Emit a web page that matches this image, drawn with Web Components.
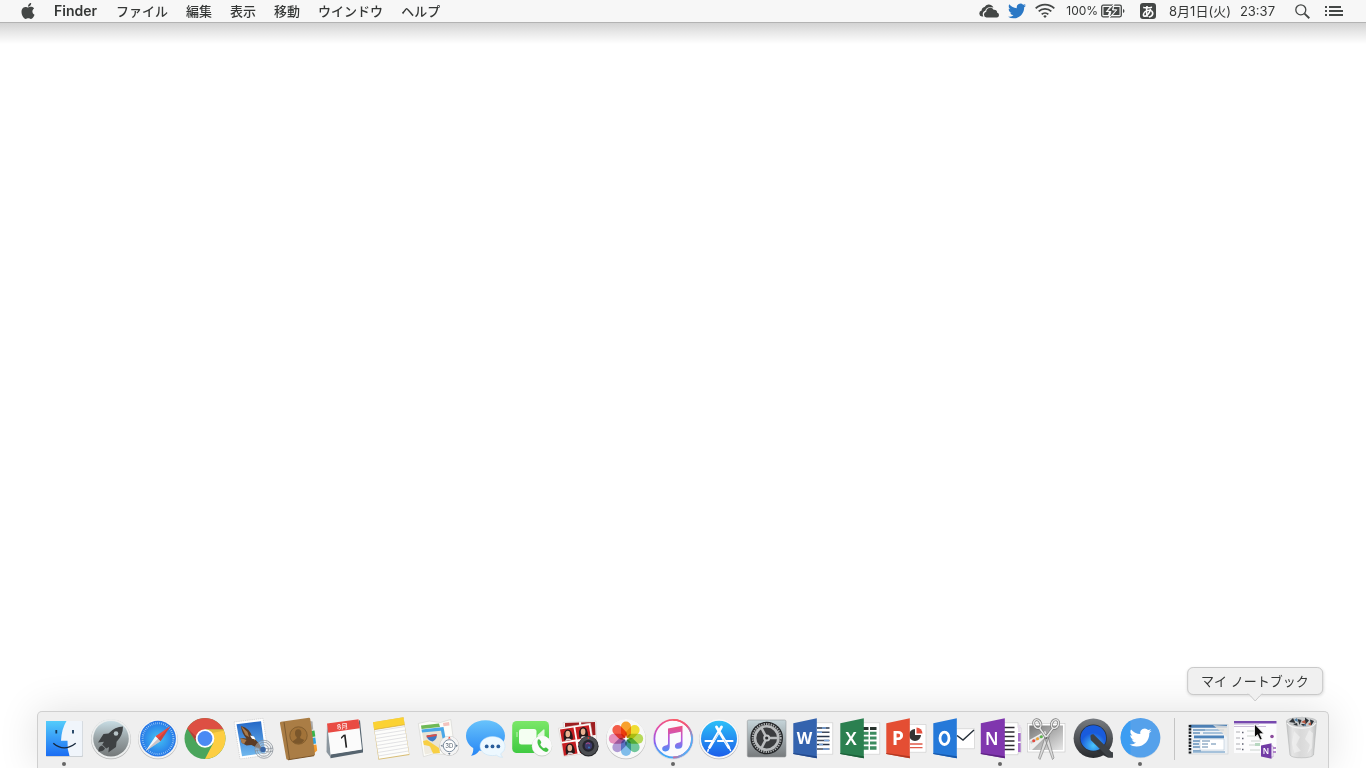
<!DOCTYPE html>
<html lang="ja">
<head>
<meta charset="utf-8">
<title>Finder</title>
<style>
  html, body { height: 100%; margin: 0; }
  body { background: #fff; color: #353736; font: 13px/22px Inter, "Noto Sans CJK JP", sans-serif; overflow: hidden; }
  .petals { isolation: isolate; }
  .petals rect { mix-blend-mode: multiply; }
</style>
</head>
<body>
<mac-desktop>
  <menu-bar slot="top">
    <menu-entry label="アップル"><svg width="16" height="16" viewBox="0 0 24 24" fill="#444746"><path d="M12.152 6.896c-.948 0-2.415-1.078-3.96-1.04-2.04.027-3.91 1.183-4.961 3.014-2.117 3.675-.546 9.103 1.519 12.09 1.013 1.454 2.208 3.09 3.792 3.039 1.52-.065 2.09-.987 3.935-.987 1.831 0 2.35.987 3.96.948 1.637-.026 2.676-1.48 3.676-2.948 1.156-1.688 1.636-3.325 1.662-3.415-.039-.013-3.182-1.221-3.22-4.857-.026-3.04 2.48-4.494 2.597-4.559-1.429-2.09-3.623-2.324-4.39-2.376-2-.156-3.675 1.09-4.61 1.09zM15.53 3.83c.843-1.012 1.4-2.427 1.245-3.83-1.207.052-2.662.805-3.532 1.818-.78.896-1.454 2.338-1.273 3.714 1.338.104 2.715-.871 3.56-1.702z"/></svg></menu-entry>
    <menu-entry strong>Finder</menu-entry>
    <menu-entry medium>ファイル</menu-entry>
    <menu-entry medium>編集</menu-entry>
    <menu-entry medium>表示</menu-entry>
    <menu-entry medium>移動</menu-entry>
    <menu-entry medium>ウインドウ</menu-entry>
    <menu-entry medium>ヘルプ</menu-entry>

    <menu-entry slot="status" label="OneDrive"><svg width="20" height="16" viewBox="0 0 20 16" fill="#444746"><path d="M4.300 13.500H3A3 3 0 0 1 2.600 7.600 3.800 3.800 0 0 1 5.600 4a5 5 0 0 1 8-.8q.6.7.8 1.300-1.400-.5-2.700-.2C9.200 3.700 6.700 5.200 6.200 7.800 4 8.200 3 11.300 4.300 13.500Z"/><path d="M7.500 14.500a2.900 2.900 0 0 1-.3-5.700C7.200 4.700 12.700 3.200 14.500 6.700c2.300-.3 3.700 1 3.700 3 2.500.4 2.300 4.800-.4 4.800Z"/></svg></menu-entry>
    <menu-entry slot="status" label="Twitter"><svg width="18" height="18" viewBox="0 0 24 24" fill="#2b78c5"><path d="M23.953 4.57a10 10 0 01-2.825.775 4.958 4.958 0 002.163-2.723c-.951.555-2.005.959-3.127 1.184a4.92 4.92 0 00-8.384 4.482C7.69 8.095 4.067 6.13 1.64 3.162a4.822 4.822 0 00-.666 2.475c0 1.71.87 3.213 2.188 4.096a4.904 4.904 0 01-2.228-.616v.06a4.923 4.923 0 003.946 4.827 4.996 4.996 0 01-2.212.085 4.936 4.936 0 004.604 3.417 9.867 9.867 0 01-6.102 2.105c-.39 0-.779-.023-1.17-.067a13.995 13.995 0 007.557 2.209c9.053 0 13.998-7.496 13.998-13.985 0-.21 0-.42-.015-.63A9.935 9.935 0 0024 4.59z"/></svg></menu-entry>
    <menu-entry slot="status" label="Wi-Fi"><svg width="20" height="16" viewBox="0 0 20 16" fill="none" stroke="#444746" stroke-width="1.800"><path d="M.7 5.400a13.200 13.200 0 0 1 18.600 0M3.700 8.400a9 9 0 0 1 12.600 0M6.700 11.400a4.700 4.700 0 0 1 6.600 0"/><path d="M8.300 13.200a2.400 2.400 0 0 1 3.400 0L10 15Z" fill="#444746" stroke="none"/></svg></menu-entry>
    <menu-entry slot="status" small>100%<svg width="24" height="14" viewBox="0 0 24 14"><rect x=".7" y="1.200" width="19.600" height="11.600" rx="1.500" fill="none" stroke="#444746" stroke-width="1.300"/><path d="M22 5v4q1.500-.5 1.500-2T22 5Z" fill="#444746"/><path d="M2.500 3h6L4.500 8H8L7 11H2.500ZM13 3h5.500v8h-6.500l4.500-5.500h-4Z" fill="#444746"/><path d="M13 0 6 7.500h4L8 14l7.500-8h-4Z" fill="#444746" stroke="#f7f7f7" stroke-width="1"/></svg></menu-entry>
    <menu-entry slot="status"><input-badge>あ</input-badge></menu-entry>
    <menu-entry slot="status">8月1日(火)</menu-entry>
    <menu-entry slot="status">23:37</menu-entry>
    <menu-entry slot="status" label="検索"><svg width="32" height="16" viewBox="-2 0 32 16" fill="none" stroke="#444746"><circle cx="14.800" cy="6.800" r="5" stroke-width="1.300"/><path d="m18.500 10.600 4.800 4.600" stroke-width="1.900"/></svg></menu-entry>
    <menu-entry slot="status" label="通知センター"><svg width="18" height="12" viewBox="0 0 18 12" fill="#444746"><path d="M0 1h2v2H0zM0 5h2v2H0zM0 9h2v2H0zM4 1h12v2H4zM4 5h14v2H4zM4 9h14v2H4z"/></svg></menu-entry>
  </menu-bar>

  <dock-bar slot="bottom">
    <dock-item label="Finder" running><svg viewBox="0 0 46 46"><defs><linearGradient id="fd" x2="0" y2="1"><stop stop-color="#54ccfb"/><stop offset="1" stop-color="#1b6df3"/></linearGradient></defs><rect x="5" y="5" width="37" height="36" rx="1" fill="#cbd0d4"/><rect x="5" y="5" width="36.300" height="35" rx="1" fill="#f0f5fb"/><path d="M5 5h20.500Q20.500 13 20 24.800h6.500Q26 33 28.500 40H5Z" fill="url(#fd)"/><path d="M15.300 14v3.600M32 14v3.600" stroke="#173a5c" stroke-width="1.800"/><path d="M12.300 27.300Q23 36.500 34.700 27.300" fill="none" stroke="#16283c" stroke-width="1.400"/></svg></dock-item>

    <dock-item label="Launchpad"><svg viewBox="0 0 46 46"><defs><linearGradient id="lp" x2="0" y2="1"><stop stop-color="#c8dde4"/><stop offset=".5" stop-color="#98a2a5"/><stop offset="1" stop-color="#75797a"/></linearGradient></defs><circle cx="23" cy="23.300" r="20" fill="#b4b4b4"/><circle cx="23" cy="22.700" r="19.700" fill="#eceeee"/><circle cx="23" cy="22.700" r="17.800" fill="url(#lp)"/><path d="M35 10.500Q27 10.500 20.500 17.500L15.500 18 10 26.500l6-.7-1.800 2.700 4 4 2.800-1.600-.7 5.600 7.700-5.500.6-5.200Q35 19.500 35 10.500Z" fill="#3e4143"/><path d="M14 29.500q-4 1-3.500 6 5 .3 6.500-3.300Z" fill="#3e4143"/><circle cx="28" cy="17.500" r="2.300" fill="#b7c3c7"/></svg></dock-item>

    <dock-item label="Safari"><svg viewBox="0 0 46 46"><defs><radialGradient id="sf"><stop stop-color="#45c4f4"/><stop offset="1" stop-color="#2474e6"/></radialGradient></defs><circle cx="23" cy="23.300" r="20" fill="#bcbcbc"/><circle cx="23" cy="22.700" r="19.700" fill="#f3f3f3"/><circle cx="23" cy="22.700" r="17.900" fill="url(#sf)"/><circle cx="23" cy="22.700" r="15.500" fill="none" stroke="#b4dcfa" stroke-width="2" stroke-dasharray=".6 1.400"/><path d="M35.500 10 20.500 20.200 25.500 25.200Z" fill="#f04a3e"/><path d="M10.500 35.300 20.500 20.200 25.500 25.200Z" fill="#f3f6f8"/><path d="m10.500 35.300 15-10.100L35.500 10 23 22.700Z" fill="#4e2f3a" opacity=".25"/></svg></dock-item>

    <dock-item label="Chrome"><svg viewBox="0 0 46 46"><circle cx="23" cy="22.500" r="20.500" fill="#4aa55c"/><path d="M5.250 12.250A20.500 20.500 0 0 1 40.750 12.250L42 13.500H23L15.200 27Z" fill="#dd4f43"/><path d="M41.400 13.500A20.500 20.500 0 0 1 23 43l8.300-16L23 13.500Z" fill="#fdce42"/><path d="M5.250 12.250 15.200 27 23 13.500 14 9Z" fill="#dd4f43"/><path d="M23 13.500h18.400l.5 1.200L30 17Z" fill="#c9a52f" opacity=".5"/><path d="m6 13 9 14 .5-5Z" fill="#8b3a32" opacity=".6"/><circle cx="23" cy="22.500" r="9.300" fill="#fff"/><circle cx="23" cy="22.500" r="7.400" fill="#4a8af4"/></svg></dock-item>

    <dock-item label="メール"><svg viewBox="1 0 46 46"><defs><linearGradient id="ml" x2="0" y2="1"><stop stop-color="#2468c7"/><stop offset="1" stop-color="#70b8ee"/></linearGradient></defs><path d="m6 6 29-3.700L40.500 39 12 43Z" fill="#fff" stroke="#cfcfcf" stroke-width=".8" stroke-dasharray="1.400 .8"/><path d="M8.500 8.300 33 5.200 37.300 37 14 40.300Z" fill="url(#ml)"/><path d="M13 10q9 2.500 11 10.500l1.500 2q5 3 8 10-2 .8-4-.5l-6-3-5 .5-4.500-2.500q-1-2-1.500-5l6 .5Q13.500 17 13 10Z" fill="#5b3b25"/><path d="m13 10 6.500 6 1.500 5-3.500-2ZM12.500 22l6 2-2.500 4-2.500-1.500Z" fill="#a97a4b"/><path d="m22 19.500 4 1 1.500 3-3.500-.7Z" fill="#fff"/><path d="m26 23 1.500.5-1 1Z" fill="#e9b23a"/><g fill="none" stroke="#858d95" stroke-width=".7"><circle cx="36" cy="33.300" r="9" fill="#e8edf1" fill-opacity=".35"/><circle cx="36" cy="33.300" r="7"/><circle cx="36" cy="33.300" r="4.500"/><path d="M27 32q4-2 9 0t9 0M27 35q4-2 9 0t9 0"/></g><circle cx="35" cy="33.500" r="2.800" fill="#3865a5"/></svg></dock-item>

    <dock-item label="連絡先"><svg viewBox="0 0 46 46"><path d="m35 4 3 1 3 31-2 2Z" fill="#ececec"/><path d="m35 5 2.500.5.7 8-2 .3Z" fill="#aaa"/><path d="m36 15 3.500-.5.8 6-3.300.5Z" fill="#37b44a"/><path d="m37 22 3.300-.5.8 6-3.300.5Z" fill="#31a3df"/><path d="m38 29 3.400-.5.8 6-3.400 3Z" fill="#f59c2d"/><path d="M6 5.800 34 1.700q1 0 1.200 1L40 38.500q0 1-1 1.200l-26 4.100q-1.400.2-1.700-1L5 7.500q-.3-1.400 1-1.700Z" fill="#aa7d45"/><path d="m9 6 5.500 37.200" stroke="#7e5b30" stroke-width="1"/><path d="m13 43.800 26-4.100" stroke="#795327"/><circle cx="23.500" cy="19.500" r="8.700" fill="#a27339" stroke="#7e5a2d" stroke-width=".9"/><ellipse cx="23.200" cy="17.300" rx="3.200" ry="4" fill="#7b572b"/><path d="M22 20h3l.3 2.300 4 1.700q-2 3.500-5.500 3.800t-6.300-2.300l4-3Z" fill="#7b572b"/></svg></dock-item>

    <dock-item label="カレンダー"><svg viewBox="1 0 46 46"><path d="m6 8 1.500 0L10 42l-4.500-6Z" fill="#8b969e"/><path d="m10 38 32-5v3.500L9.500 42.300Z" fill="#56646f"/><path d="m37.500 4 1.500.5L42 34.500l-2-.5Z" fill="#596873"/><path d="m6 7.500 31.500-4.300L41 33.500 9.700 38.500Z" fill="#fbfbfb"/><path d="m6 7.500 31.500-4.300 1.300 9L7.200 16.700Z" fill="#e94b43"/><g transform="rotate(-7 23 22)" text-anchor="middle" font-family="Inter, 'Noto Sans CJK JP', sans-serif"><text x="23" y="13" font-size="7" fill="#fff">8月</text><text x="23" y="32" font-size="18" fill="#222">1</text></g></svg></dock-item>

    <dock-item label="メモ"><svg viewBox="1 0 46 46"><path d="m5 6.300 30.500-5L41.500 39 10.500 43.800Z" fill="#d8bd75"/><path d="m5.500 8 30-5L41 38 11 42.700Z" fill="#fdfdfb"/><path d="m5 6.300 30.500-5 1.200 7.500L6.200 13.700Z" fill="#fbd233"/><path d="m6 15.500 31-5M7 19l31-5M7.500 22.500l31-5M8 26l31-5M8.500 29.500l31-5M9 33l30.500-5M9.700 36.500l30.500-5M10 40l30.500-5" stroke="#d5d6da" stroke-width=".7"/><path d="m6.200 13.700 30.500-4.900" stroke="#c99e33" stroke-width=".6"/></svg></dock-item>

    <dock-item label="マップ"><svg viewBox="1 0 46 46"><path d="m3.300 7.500 11-2.500 11 1.500 10.500-3L40 36.500l-11 2-10-1-10.500 3.200Z" fill="#fcfcf8" stroke="#d2d2ce" stroke-width=".6"/><path d="m6 9.500 18-2 1 3.500-18.500 2Z" fill="#6fb956"/><path d="m28 7 6-1 .5 3.500-6 .8Z" fill="#f3c4be"/><path d="m7 15.500 20-2.500 3 21-12 2-8 2Z" fill="#e9e4d5"/><path d="m6.500 13.500 22-2.500 2 11-3 .5-1.500-7.800L7 16.500Z" fill="#4aa8e8"/><path d="m8 25 4-1 12 8 1 5-7 .5-3-7-6-1Z" fill="#f8cf43"/><path d="m9 29 5 1 3 7-7 1.500Z" fill="#efebe0"/><path d="m11.500 19.500 10-1.500q1.500 5-3.800 7.500-5.400-.8-6.200-6Z" fill="#3d79c3"/><path d="m11.500 19.500 10-1.500.2 2-10 1.500Z" fill="#d94f48"/><circle cx="34.300" cy="30" r="9.900" fill="#bdbdbd"/><circle cx="34.300" cy="29.700" r="9.500" fill="#f4f4f4"/><circle cx="34.300" cy="29.700" r="6" fill="#fff" stroke="#5d7187" stroke-width=".8"/><path d="m34.300 20.500 1.300 2H33Z" fill="#e34835"/><path d="m34.300 39-1.300-2h2.600ZM25.500 29.700l2-1.300V31ZM43 29.700l-2-1.300V31Z" fill="#6b7a89"/><text x="34.300" y="32" font-size="6" text-anchor="middle" fill="#4c5a68" font-family="Inter, sans-serif">3D</text></svg></dock-item>

    <dock-item label="メッセージ"><svg viewBox="0 0 46 46"><defs><linearGradient id="ms" x2="0" y2="1"><stop stop-color="#68c3fb"/><stop offset="1" stop-color="#2786f5"/></linearGradient></defs><path d="M23.500 4.300C12.500 4.300 4 11 4 19.800c0 5 2.700 9.500 7.200 12.300q.5 4.800-2.200 7.700 5-.5 8.500-5.200 3 .8 6 .8C34.500 35.400 43 28.500 43 19.800S34.500 4.300 23.500 4.300Z" fill="url(#ms)"/><path d="M30.500 20.500c7 0 12.500 4.200 12.500 9.700 0 3.200-1.500 5.800-4.300 7.500q.2 2.200 2 3.600-4 0-6.300-2.200-2 .500-3.900.5C23.500 39.600 18 35.600 18 30.200s5.500-9.700 12.500-9.700Z" fill="#edf8ff" stroke="#bcdff6" stroke-width=".5"/><g fill="#295d9b"><circle cx="24.700" cy="30.400" r="1.900"/><circle cx="30.500" cy="30.400" r="1.900"/><circle cx="36.300" cy="30.400" r="1.900"/></g></svg></dock-item>

    <dock-item label="FaceTime"><svg viewBox="0 0 46 46"><defs><linearGradient id="ft" x2="0" y2="1"><stop stop-color="#7be768"/><stop offset="1" stop-color="#40ca42"/></linearGradient></defs><rect x="3.200" y="5" width="36.800" height="32" rx="4.500" fill="url(#ft)"/><rect x="10" y="13" width="17.500" height="15.500" rx="2.500" fill="#f4fff2"/><path d="m28.500 19 6-5.500q1-.5 1 .8v12.500q0 1-1 .5l-6-5Z" fill="#e4f8e0"/><path d="M8 16v5" stroke="#c5f2bc"/><circle cx="33" cy="30.200" r="10.200" fill="#c9d1c8"/><circle cx="33" cy="29.700" r="9.900" fill="#fbfbfb"/><path d="M28.800 23.700q1.300-1.200 2.400.5l1 1.900q.4 1-.8 1.800-.5.500 1.200 2.600t2.600 1.700q1.100-1.200 2-.6l1.900 1.400q1.200 1-.3 2.300-2.500 2.100-7-2.500t-3-9.100Z" fill="#45c246"/></svg></dock-item>

    <dock-item label="Photo Booth"><svg viewBox="1 0 46 46"><path d="m8 6.500 33-1.500.8 30-30 2Z" fill="#f8f4f2" stroke="#cbc6c4" stroke-width=".5"/><path d="m10 7 14-.5v6l-14 1Zm16-.5L40 6l.5 13-12 1Z" fill="#9e1d1f"/><path d="m3.400 12.300 32-5.200L40 36 9 40.500Z" fill="#fffaf8" stroke="#cbc6c4" stroke-width=".5"/><g id="pb"><path d="m5 13.500 13.500-2 2 12-13.500 2.300Z" fill="#c71f22"/><path d="M9 23.500q-1.500-8.500 3-10 5-1 6 9l-2 1.200q-3 1-6 1Z" fill="#26191a"/><ellipse cx="12.800" cy="18" rx="2.300" ry="3.200" fill="#e9b292"/><path d="m10 25 1.500-2.500h3l2.200 1.500Z" fill="#ded6d6"/></g><use href="#pb" x="15.300" y="-2.300"/><use href="#pb" x="2" y="14"/><path d="m23 26 10-1.500 2 11-10 1.500Z" fill="#9f191c"/><circle cx="33.400" cy="30.300" r="10.200" fill="#252629"/><circle cx="33.400" cy="29.700" r="9.500" fill="#4c4e52"/><circle cx="33.400" cy="29.700" r="6" fill="#25262d"/><circle cx="33.400" cy="29.700" r="3.700" fill="#3d3b6d"/><path d="M31 28q2-2.500 4 0" fill="none" stroke="#b64b82"/><circle cx="34" cy="31.500" r="1" fill="#3579bd"/><circle cx="33.400" cy="22" r=".9" fill="#d83d35"/></svg></dock-item>

    <dock-item label="写真"><svg viewBox="0 0 46 46"><circle cx="23" cy="23.300" r="20" fill="#bdbdbd"/><circle cx="23" cy="22.700" r="19.700" fill="#f8f8f8"/><g class="petals"><rect x="18" y="5.500" width="10" height="16.500" rx="5" fill="#f8a12e"/><rect x="18" y="5.500" width="10" height="16.500" rx="5" fill="#efdc32" transform="rotate(45 23 22.700)"/><rect x="18" y="5.500" width="10" height="16.500" rx="5" fill="#b7da58" transform="rotate(90 23 22.700)"/><rect x="18" y="5.500" width="10" height="16.500" rx="5" fill="#70c79b" transform="rotate(135 23 22.700)"/><rect x="18" y="5.500" width="10" height="16.500" rx="5" fill="#80bdea" transform="rotate(180 23 22.700)"/><rect x="18" y="5.500" width="10" height="16.500" rx="5" fill="#b09ad4" transform="rotate(225 23 22.700)"/><rect x="18" y="5.500" width="10" height="16.500" rx="5" fill="#e690bc" transform="rotate(270 23 22.700)"/><rect x="18" y="5.500" width="10" height="16.500" rx="5" fill="#f35d49" transform="rotate(315 23 22.700)"/></g><path d="m23 19 .8 2.900 2.900.8-2.900.8-.8 2.900-.8-2.900-2.900-.8 2.900-.8Z" fill="#fff"/></svg></dock-item>

    <dock-item label="iTunes" running><svg viewBox="0 0 46 46"><defs><linearGradient id="it" x1=".7" x2=".3" y2="1"><stop stop-color="#fa5c66"/><stop offset=".4" stop-color="#e04fac"/><stop offset=".75" stop-color="#8c5bef"/><stop offset="1" stop-color="#37b6f4"/></linearGradient><linearGradient id="ir" x2="1" y2="1"><stop stop-color="#fa5c66"/><stop offset=".45" stop-color="#ef5680"/><stop offset=".75" stop-color="#58b0f2"/><stop offset="1" stop-color="#37b6f4"/></linearGradient><linearGradient id="in" x2="0" y2="1"><stop stop-color="#f15078"/><stop offset=".5" stop-color="#b957de"/><stop offset="1" stop-color="#4b8ff7"/></linearGradient></defs><circle cx="23.200" cy="23" r="20.300" fill="#d0d0d4"/><circle cx="23.200" cy="22.700" r="20" fill="#fff"/><circle cx="23.200" cy="22.700" r="18.800" fill="#fafafd" stroke="url(#it)" stroke-width="1.800"/><path d="M23.200 3.900a18.800 18.800 0 0 1 0 37.600" fill="none" stroke="url(#ir)" stroke-width="1.800"/><path d="M18 12.500 32.500 9.700v18.500q0 4.500-4.300 4.600-3.200 0-3.300-2.600 0-2.600 3.300-3.400 2.700-.4 2.700-1.600v-9.400l-11.200 2.200v13q-.1 4.200-4.200 4.400-3.200-.1-3.300-2.700 0-2.500 3.300-3.200 2.500-.4 2.500-1.800Z" fill="url(#in)"/></svg></dock-item>

    <dock-item label="App Store"><svg viewBox="0 0 46 46"><defs><linearGradient id="as" x2="0" y2="1"><stop stop-color="#2cc0f8"/><stop offset="1" stop-color="#1c5eea"/></linearGradient></defs><circle cx="23" cy="23.300" r="20" fill="#b8b8bc"/><circle cx="23" cy="22.700" r="19.700" fill="#f8f8f8"/><circle cx="23" cy="22.700" r="18" fill="url(#as)"/><g stroke="#fff" fill="none" stroke-linecap="round"><path d="M9.500 25h8M22 25h14.500" stroke-width="2.200"/><path d="M13.500 31.500 25.500 11M20.500 11l12.300 20.500" stroke-width="2.800"/><path d="m12.300 33.500-.5 1.700M33.500 32.500l1 2" stroke-width="1.500"/></g><path d="m18 25 4.500-8" stroke="#9cc9f6" stroke-width=".7"/><path d="m27.500 22.800 3.500 6" stroke="#9cc9f6" stroke-width=".7"/></svg></dock-item>

    <dock-item label="システム環境設定"><svg viewBox="0 0 46 46"><defs><linearGradient id="sp" x2="0" y2="1"><stop stop-color="#c6d5da"/><stop offset="1" stop-color="#777a7c"/></linearGradient></defs><rect x="4.300" y="4" width="38.700" height="37" rx="1.500" fill="url(#sp)" stroke="#96999b" stroke-width=".6"/><circle cx="23.700" cy="22" r="16.300" fill="#232527"/><circle cx="23.700" cy="22" r="14" fill="none" stroke="#a9acad" stroke-width="2" stroke-dasharray="1.400 1"/><circle cx="23.700" cy="22" r="11.700" fill="#3a3c3e" stroke="#b9bcbd" stroke-width="2.600"/><path d="M23.700 22 18.500 12M23.700 22 18.500 32M23.700 22h11.500" stroke="#b9bcbd" stroke-width="2.600"/><circle cx="23.700" cy="22" r="3.500" fill="#c2c5c6"/><circle cx="23.700" cy="22" r="1.600" fill="#303234"/></svg></dock-item>

    <dock-item label="Word"><svg viewBox="0 0 46 46"><path d="M26 6.700h16.700v31.600H26Z" fill="#fff" stroke="#d0d0d0" stroke-width=".7"/><path d="M27 12h12.500M27 20.500h12.500M27 28.500h12.500" stroke="#27344a" stroke-width="1.600"/><path d="M27 16.200h12.500M27 24.500h12.500M27 33h12.500" stroke="#414b5c" stroke-width="1.600"/><path d="M32 12h4M27 16.200h5M34 24.500h5M29 28.500h4M33 33h6" stroke="#7aa5dd" stroke-width="1.600"/><path d="m3.300 7.300 23.500-5v40l-23.500-4.300Z" fill="#3463ae"/><path d="m3.300 38 23.500 4.300v-2L3.300 37Z" fill="#24498a"/><text x="14.500" y="28" font-size="16" font-weight="700" text-anchor="middle" fill="#fff" font-family="'Noto Sans', sans-serif">W</text></svg></dock-item>

    <dock-item label="Excel"><svg viewBox="0 0 46 46"><path d="M26 6.700h16.700v31.600H26Z" fill="#fff" stroke="#d0d0d0" stroke-width=".7"/><path d="M26 11h5.500v3H26zM33 11h6.500v3H33z" fill="#27332d"/><path d="M26 15.800h5.500v3H26zM33 15.800h6.500v3H33zM26 20.600h5.500v3H26zM33 20.600h6.500v3H33zM26 25.400h5.500v3H26zM33 25.400h6.500v3H33zM26 30.200h5.500v3.600H26zM33 30.200h6.500v3.600H33z" fill="#3c8c60"/><path d="m3.300 7.300 23.500-5v40l-23.500-4.300Z" fill="#2b8050"/><path d="m3.300 38 23.500 4.300v-2L3.300 37Z" fill="#1d6039"/><text x="14" y="29" font-size="18" font-weight="600" text-anchor="middle" fill="#fff" font-family="'Noto Sans', sans-serif">X</text></svg></dock-item>

    <dock-item label="PowerPoint"><svg viewBox="0 0 46 46"><path d="M26 8.500h17v27.800H26Z" fill="#fff" stroke="#d0d0d0" stroke-width=".7"/><path d="M32 13a6 6 0 1 0 6 6h-6Z" fill="#333"/><path d="M33.500 11.500a6 6 0 0 1 6 6h-6Z" fill="#e5503e"/><path d="M27 28h12.500M27 31.700h12.500" stroke="#e05a48" stroke-width="1.300"/><path d="m3.300 7.300 23.500-5v40l-23.500-4.300Z" fill="#e44e33"/><path d="m3.300 38 23.500 4.300v-2L3.300 37Z" fill="#b23922"/><text x="15" y="29" font-size="19" font-weight="700" text-anchor="middle" fill="#fff" font-family="'Noto Sans', sans-serif">P</text></svg></dock-item>

    <dock-item label="Outlook"><svg viewBox="0 0 46 46"><path d="M26 12.700h18.500v20H26Z" fill="#fff" stroke="#d0d0d0" stroke-width=".7"/><path d="m27 19.500 6 4.500 11-10" fill="none" stroke="#27313b" stroke-width="1.400"/><path d="m3.300 7.300 23.500-5v40l-23.500-4.300Z" fill="#2579d9"/><path d="m3.300 38 23.500 4.300v-2L3.300 37Z" fill="#1858a9"/><ellipse cx="14.500" cy="22.300" rx="4.500" ry="6.200" fill="none" stroke="#fff" stroke-width="2.800"/></svg></dock-item>

    <dock-item label="OneNote" running><svg viewBox="0 0 46 46"><path d="M27 6.700h14v5h3v25h-3v2H27Z" fill="#fff" stroke="#ccc" stroke-width=".7"/><path d="M41 17h2.700v8.500H41zM41 27h2.700v9H41z" fill="#a76fca"/><path d="M41 9h2.500v7H41z" fill="#e6dbec"/><path d="M27 11.500h10.500M27 16h10.500M27 20.500h10.500M27 25h10.500M27 29.500h10.500M27 33.500h10.500" stroke="#2d2931" stroke-width="1.500"/><path d="m3.800 7.300 24-5v40l-24-4.300Z" fill="#8036ae"/><path d="m3.800 38 24 4.300v-2L3.800 37Z" fill="#5d2482"/><text x="14.800" y="29" font-size="17" font-weight="600" text-anchor="middle" fill="#fff" font-family="'Noto Sans', sans-serif">N</text></svg></dock-item>

    <dock-item label="グラブ"><svg viewBox="1 0 46 46"><defs><linearGradient id="gr" x2="1" y2="1"><stop stop-color="#777"/><stop offset="1" stop-color="#e7e7e7"/></linearGradient></defs><rect x="4.300" y="7.500" width="37.700" height="28.500" fill="#fff" stroke="#c5c5c5" stroke-width=".6"/><rect x="6.300" y="9.500" width="33.700" height="24.500" fill="url(#gr)"/><path d="m6.300 24 16-9 1.500 4.500L9 34H6.300Z" fill="#eee"/><path d="m7 25.500 14-8 .8 2.500L8 28Z" fill="#ccc"/><circle cx="10.700" cy="24.800" r="1.500" fill="#e5483c"/><circle cx="14.500" cy="22.700" r="1.500" fill="#efa12d"/><circle cx="18.300" cy="20.700" r="1.500" fill="#5ab54b"/><g fill="none" stroke="#777" stroke-width="2.800"><ellipse cx="14.300" cy="8" rx="3.400" ry="4.500" transform="rotate(-25 14.300 8)"/><ellipse cx="32" cy="8" rx="3.400" ry="4.500" transform="rotate(25 32 8)"/><path d="m16.500 12 7.200 10M30 12l-7.400 10"/></g><path d="m21 20 3.500-2L31 42l-1.500 1.500Zm5.500 0L23 18l-7.500 24L17 43.500Z" fill="#ddd" stroke="#767676" stroke-width=".6"/><g fill="none" stroke="#e6e6e6" stroke-width="1.500"><ellipse cx="14.300" cy="8" rx="3.400" ry="4.500" transform="rotate(-25 14.300 8)"/><ellipse cx="32" cy="8" rx="3.400" ry="4.500" transform="rotate(25 32 8)"/><path d="m16.500 12 7.200 10M30 12l-7.400 10"/></g><circle cx="23.300" cy="22" r="1" fill="#666"/></svg></dock-item>

    <dock-item label="QuickTime Player"><svg viewBox="1 0 46 46"><defs><linearGradient id="qt" x2="0" y2="1"><stop stop-color="#787c81"/><stop offset="1" stop-color="#292b2e"/></linearGradient><radialGradient id="qb" cy=".8"><stop stop-color="#4ac6fa"/><stop offset="1" stop-color="#195bdc"/></radialGradient></defs><circle cx="23.300" cy="22.300" r="19.700" fill="url(#qt)"/><path d="m30 29 7 7h5.700v5.500h-5L27 36Z" fill="#2e3033"/><circle cx="23.300" cy="22" r="13.600" fill="#26313f"/><circle cx="23.300" cy="22" r="12.800" fill="url(#qb)"/><path d="M20.500 21q-.500-3 3-2.700L43 37.500v4h-4.500L20.800 24Z" fill="#3e4246"/></svg></dock-item>

    <dock-item label="Twitter" running><svg viewBox="0 0 46 46"><circle cx="23.500" cy="22.300" r="20" fill="#d8dde1"/><circle cx="23.500" cy="21.700" r="19.800" fill="#55a1eb"/><path d="M13.500 4.600V38.800A19.800 19.800 0 0 1 13.500 4.600Z" fill="#3c9df2"/><g transform="translate(12.500 10.500) scale(.92)"><path fill="#fff" d="M23.953 4.570a10 10 0 01-2.825.775 4.958 4.958 0 002.163-2.723c-.951.555-2.005.959-3.127 1.184a4.920 4.920 0 00-8.384 4.482C7.690 8.095 4.067 6.130 1.640 3.162a4.822 4.822 0 00-.666 2.475c0 1.710.870 3.213 2.188 4.096a4.904 4.904 0 01-2.228-.616v.060a4.923 4.923 0 003.946 4.827 4.996 4.996 0 01-2.212.085 4.936 4.936 0 004.604 3.417 9.867 9.867 0 01-6.102 2.105c-.390 0-.779-.023-1.170-.067a13.995 13.995 0 007.557 2.209c9.053 0 13.998-7.496 13.998-13.985 0-.210 0-.420-.015-.630A9.935 9.935 0 0024 4.590z"/></g></svg></dock-item>

    <dock-item slot="windows" label="ウインドウ"><svg viewBox="0 0 46 46"><rect x="4" y="8.500" width="39" height="29.500" fill="#eef2f6" stroke="#c9cdd1" stroke-width=".6"/><path d="M5 8.700h37v3H5z" fill="#4c7fb4"/><path d="M5 9v29" stroke="#171a1d" stroke-width="2.600" stroke-dasharray="2.200 1.100"/><path d="M8 14h12M8 17h7M8 25h7M8 28h6M8 31h7M8 35h8" stroke="#86a9c9" stroke-width="2"/><path d="M9 19.500h30v2.800H9z" fill="#4c83ba"/><path d="M15 23h24v11H15z" fill="#fff" stroke="#a9bfd2" stroke-width=".5"/><path d="M17 25h8M26 28h5M17 28h6M17 31h6" stroke="#5e86ac"/><path d="M20 14h19M8 36h32M18 17h20" stroke="#8fb3d2" stroke-width="1.300"/><path d="m28 9 14 12V10Z" fill="#e7e4de" opacity=".8"/></svg></dock-item>

    <dock-item slot="windows" label="マイ ノートブック" tip><svg viewBox="1 0 46 46"><path d="M3 5h42.500v32H3Z" fill="#fcfcfd"/><path d="M3 5h42.500v2.600H3Z" fill="#7749af"/><path d="M3 8.200h25M3 10.500h32" stroke="#cbbed9"/><path d="M5 16h4M5 22h4M5 28h4M5 33h5" stroke="#c8c8cc" stroke-width="1.500"/><path d="M11 16.500h1.500M11 22.500h1.500M11 28h1.500M11 33.500h1.500" stroke="#5f6272" stroke-width="1.500"/><path d="M16 15h9M16 20h15M20 25h10M18 29h9M19 34h10" stroke="#c9d2cd" stroke-width="1.200"/><path d="M24 27h5v3h-5z" fill="#b8d8c1"/><circle cx="41" cy="20.500" r="1.800" fill="#8c4c9d"/><path d="M41 32h4M41 36h4" stroke="#b58acc" stroke-width="2"/><path d="M37 30h5v11h-5z" fill="#fff" stroke="#9a70b7" stroke-width=".5"/><path d="m30 29.500 10.500-2.200v15.500L30 40.500Z" fill="#713ba5"/><text x="35" y="38" font-size="8" font-weight="600" text-anchor="middle" fill="#fff" font-family="'Noto Sans', sans-serif">N</text><path d="M23.500 8v13.500l3-2.800 2.500 5.400 2.300-1.100-2.500-5.200h4.200Z" fill="#0b0b0b" stroke="#fff" stroke-width=".8"/></svg></dock-item>

    <dock-item slot="windows" label="ゴミ箱"><svg viewBox="1 0 46 46"><defs><linearGradient id="tr"><stop stop-color="#bfc0c1"/><stop offset=".2" stop-color="#e4e4e4"/><stop offset=".45" stop-color="#d6d6d6"/><stop offset=".8" stop-color="#e0e0e0"/><stop offset="1" stop-color="#b7b8b9"/></linearGradient></defs><ellipse cx="23.500" cy="5" rx="15" ry="3.500" fill="#d6d7d8" stroke="#b5b6b7" stroke-width=".7"/><path d="m11 5 4-3 4 1 5-2.500 4 2L33 2l3.500 4-5 5H14Z" fill="#c9cbcc"/><path d="m11 6 4-4 2.500 5ZM19.500 3l4 1-2 5ZM27 1.500l4 3-4 4.500ZM32 3.500l4 1.500-3 5ZM15 8l4-1 1 4ZM23 8l4 0-1 3Z" fill="#2f3439"/><path d="m23 6 4-2 1 4ZM30 8l3-2 0 4Z" fill="#b85b45"/><path d="m16 4 3-2 1 4ZM25 9l3-1 0 3Z" fill="#4e7da3"/><path d="M8.500 5.500q1.500 4 15 4.700T38.500 5.500L35.500 39q-2 2.800-12 2.800T12 39Z" fill="url(#tr)" fill-opacity=".9" stroke="#b2b3b4" stroke-width=".6"/><path d="M9 7q4 5 14.500 5.200T38 7" fill="none" stroke="#f5f5f5" stroke-width="1.200"/><path d="m16 15 6 6-4 8 5 6-7 2-2-10ZM31 14l-4 9 5 6-3 9 5-6 1-15Z" fill="#f3f3f3" opacity=".6"/></svg></dock-item>
  </dock-bar>
</mac-desktop>

<script>
  const define = (name, html, setup) => {
    const template = document.createElement('template');
    template.innerHTML = html;
    customElements.define(name, class extends HTMLElement {
      constructor() {
        super();
        this.attachShadow({ mode: 'open' }).append(template.content.cloneNode(true));
      }
      connectedCallback() {
        if (setup) setup(this, this.shadowRoot);
      }
    });
  };

  define('mac-desktop', `
    <style>
      :host { display: flex; flex-direction: column; justify-content: space-between; min-height: 100vh; }
    </style>
    <slot name="top"></slot>
    <main></main>
    <slot name="bottom"></slot>`);

  define('menu-bar', `
    <style>
      :host { display: block; }
      header { display: flex; justify-content: space-between; height: 22px; padding: 0 23px 0 20px; background: #f7f7f7; border-bottom: 1px solid #b3b3b3; }
      nav { display: flex; gap: 18px; }
      .status { display: flex; gap: 9px; }
      .shade { height: 21px; background: linear-gradient(#d3d3d3, #e8e8e8 45%, #fff); }
    </style>
    <header>
      <nav><slot></slot></nav>
      <div class="status"><slot name="status"></slot></div>
    </header>
    <div class="shade"></div>`);

  define('menu-entry', `
    <style>
      :host { display: block; }
      button { display: flex; align-items: center; gap: 3px; height: 22px; margin: 0; padding: 0; border: 0; background: none; color: inherit; font: inherit; white-space: nowrap; }
      :host([strong]) button { font-size: 14px; font-weight: 600; padding-right: 1px; }
      :host([medium]) button { font-weight: 500; }
      :host([small]) button { font-size: 12px; padding-left: 2px; }
      ::slotted(svg) { display: block; flex: none; }
    </style>
    <button type="button"><slot></slot></button>`, (el, root) => {
      if (el.hasAttribute('label')) root.querySelector('button').setAttribute('aria-label', el.getAttribute('label'));
    });

  define('input-badge', `
    <style>
      :host { display: block; padding: 0 4px 0 6px; }
      span { display: block; width: 16px; height: 16px; border-radius: 3px; background: #444746; color: #fff; font-size: 13px; font-weight: 700; line-height: 16px; text-align: center; }
    </style>
    <span><slot></slot></span>`);

  define('dock-bar', `
    <style>
      :host { display: flex; margin: 0 37px; padding: 4px 3px 0; height: 52px; background: #efefef; border: 1px solid #cfcfcf; border-bottom: 0; border-radius: 5px 5px 0 0; box-shadow: 0 0 40px rgba(0, 0, 0, .12); }
      .apps { display: flex; flex: 24; }
      .windows { display: flex; flex: 3; }
      hr { width: 1px; height: 42px; margin: 2px 10px; border: 0; background: #c4c4c4; }
    </style>
    <div class="apps"><slot></slot></div>
    <hr>
    <div class="windows"><slot name="windows"></slot></div>`);

  define('dock-item', `
    <style>
      :host { display: block; flex: 1; min-width: 0; position: relative; }
      button { display: flex; flex-direction: column; align-items: center; width: 100%; margin: 0; padding: 0; border: 0; background: none; color: inherit; font: inherit; }
      ::slotted(svg) { display: block; width: 46px; height: 46px; flex: none; }
      i { display: none; width: 4px; height: 4px; border-radius: 2px; background: #666; }
      :host([running]) i { display: block; }
    </style>
    <button type="button"><slot></slot><i></i></button>`, (el, root) => {
      const label = el.getAttribute('label');
      root.querySelector('button').setAttribute('aria-label', label);
      if (el.hasAttribute('tip') && !root.querySelector('dock-tip')) {
        const tip = document.createElement('dock-tip');
        tip.textContent = label;
        root.append(tip);
      }
    });

  define('dock-tip', `
    <style>
      :host { position: absolute; bottom: 73px; left: 50%; transform: translateX(-50%); box-sizing: border-box; height: 28px; padding: 0 13px; border: 1px solid #c9c9c9; border-radius: 6px; background: #f0f0f0; box-shadow: 0 1px 3px rgba(0, 0, 0, .12); line-height: 26px; white-space: nowrap; }
      svg { position: absolute; top: 100%; left: 50%; margin: -1px 0 0 -8px; }
    </style>
    <slot></slot>
    <svg width="16" height="9" viewBox="0 0 16 9"><path d="M0 0h16v1q-2 0-3.500 2L8 8 3.500 3Q2 1 0 1Z" fill="#f0f0f0"/><path d="M0 1q2 0 3.500 2L8 8l4.500-5Q14 1 16 1" fill="none" stroke="#c9c9c9"/></svg>`);
</script>
</body>
</html>
